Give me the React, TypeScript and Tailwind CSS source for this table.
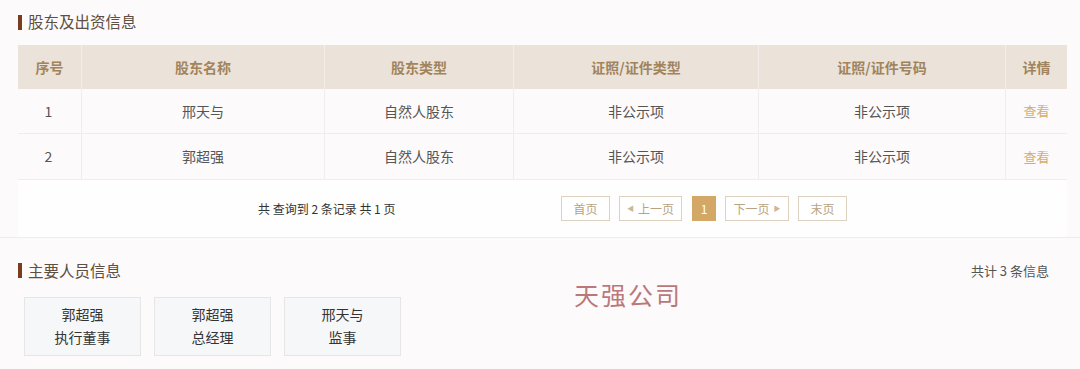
import React from "react";

const cols = "grid grid-cols-[64px_243px_189px_245px_247px_61px]";

const rows = [
  { no: "1", name: "邢天与" },
  { no: "2", name: "郭超强" },
];

const people = [
  { name: "郭超强", role: "执行董事" },
  { name: "郭超强", role: "总经理" },
  { name: "邢天与", role: "监事" },
];

function Title({ text }: { text: string }) {
  return (
    <div className="flex items-center h-[18px]">
      <div className="w-[4px] h-[15px] bg-[#7a3c1e]" />
      <span className="ml-[6px] text-[15.5px] leading-none text-[#5e4f43]">{text}</span>
    </div>
  );
}

export default function App() {
  return (
    <div
      className="relative w-[1080px] h-[369px] overflow-hidden bg-[#fcfafa]"
      style={{ fontFamily: '"Noto Sans CJK SC", "Noto Sans", sans-serif' }}
    >
      <div className="pl-[18px] pt-[13px]">
        <Title text="股东及出资信息" />
      </div>

      <div className="ml-[18px] mt-[14px] w-[1049px]">
        <div className={`${cols} h-[44px] bg-[#ebe3da] text-[14px] font-bold text-[#a2845c]`}>
          {["序号", "股东名称", "股东类型", "证照/证件类型", "证照/证件号码", "详情"].map((h, i) => (
            <div
              key={i}
              className={`flex items-center justify-center ${i < 5 ? "border-r border-[#f3eee9]" : ""}`}
            >
              {h}
            </div>
          ))}
        </div>
        {rows.map((r, idx) => (
          <div
            key={r.no}
            className={`${cols} ${idx === 0 ? "h-[45px]" : "h-[46px]"} bg-[#fcfafa] border-b border-[#f1edea] text-[14px] text-[#555]`}
          >
            <div className="flex items-center justify-center border-r border-[#f1edea] pr-[2px]">{r.no}</div>
            <div className="flex items-center justify-center border-r border-[#f1edea]">{r.name}</div>
            <div className="flex items-center justify-center border-r border-[#f1edea]">自然人股东</div>
            <div className="flex items-center justify-center border-r border-[#f1edea]">非公示项</div>
            <div className="flex items-center justify-center border-r border-[#f1edea]">非公示项</div>
            <div className="flex items-center justify-center text-[13px] text-[#d6ad6c]">查看</div>
          </div>
        ))}
        <div className="flex items-center h-[57px] bg-[#fefefe] text-[12px]">
          <div className="w-[543px] pl-[240px] text-[#333] whitespace-pre">共 查询到 2 条记录 共 1 页</div>
          <div className="flex items-center gap-[9px] text-[12px] text-[#b7a383]">
            <div className="w-[49px] h-[25px] border border-[#dcd2bf] bg-white flex items-center justify-center">首页</div>
            <div className="w-[63px] h-[25px] border border-[#dcd2bf] bg-white flex items-center justify-center">
              <span className="text-[7px] mr-[4px] text-[#c9b89a]">◀</span>上一页
            </div>
            <div className="w-[24px] h-[25px] ml-[1px] bg-[#d3a866] text-white flex items-center justify-center">1</div>
            <div className="w-[64px] h-[25px] border border-[#dcd2bf] bg-white flex items-center justify-center">
              下一页<span className="text-[7px] ml-[4px] text-[#c9b89a]">▶</span>
            </div>
            <div className="w-[49px] h-[25px] border border-[#dcd2bf] bg-white flex items-center justify-center">末页</div>
          </div>
        </div>
      </div>

      <div className="h-[1px] bg-[#efebea]" />

      <div className="flex items-center justify-between pl-[18px] pr-[31px] mt-[23px]">
        <Title text="主要人员信息" />
        <span className="text-[13px] text-[#555]">共计 3 条信息</span>
      </div>

      <div className="flex gap-[13px] pl-[24px] mt-[16px]">
        {people.map((p, i) => (
          <div
            key={i}
            className="w-[117px] h-[59px] bg-[#f6f7f9] border border-[#e6e6e6] flex flex-col items-center justify-center text-[14px] text-[#333] leading-[23px]"
          >
            <div>{p.name}</div>
            <div>{p.role}</div>
          </div>
        ))}
      </div>

      <div className="absolute left-[574px] top-[282px] text-[25px] tracking-[2px] text-[#b56a6e] opacity-90 leading-none">
        天强公司
      </div>
    </div>
  );
}
